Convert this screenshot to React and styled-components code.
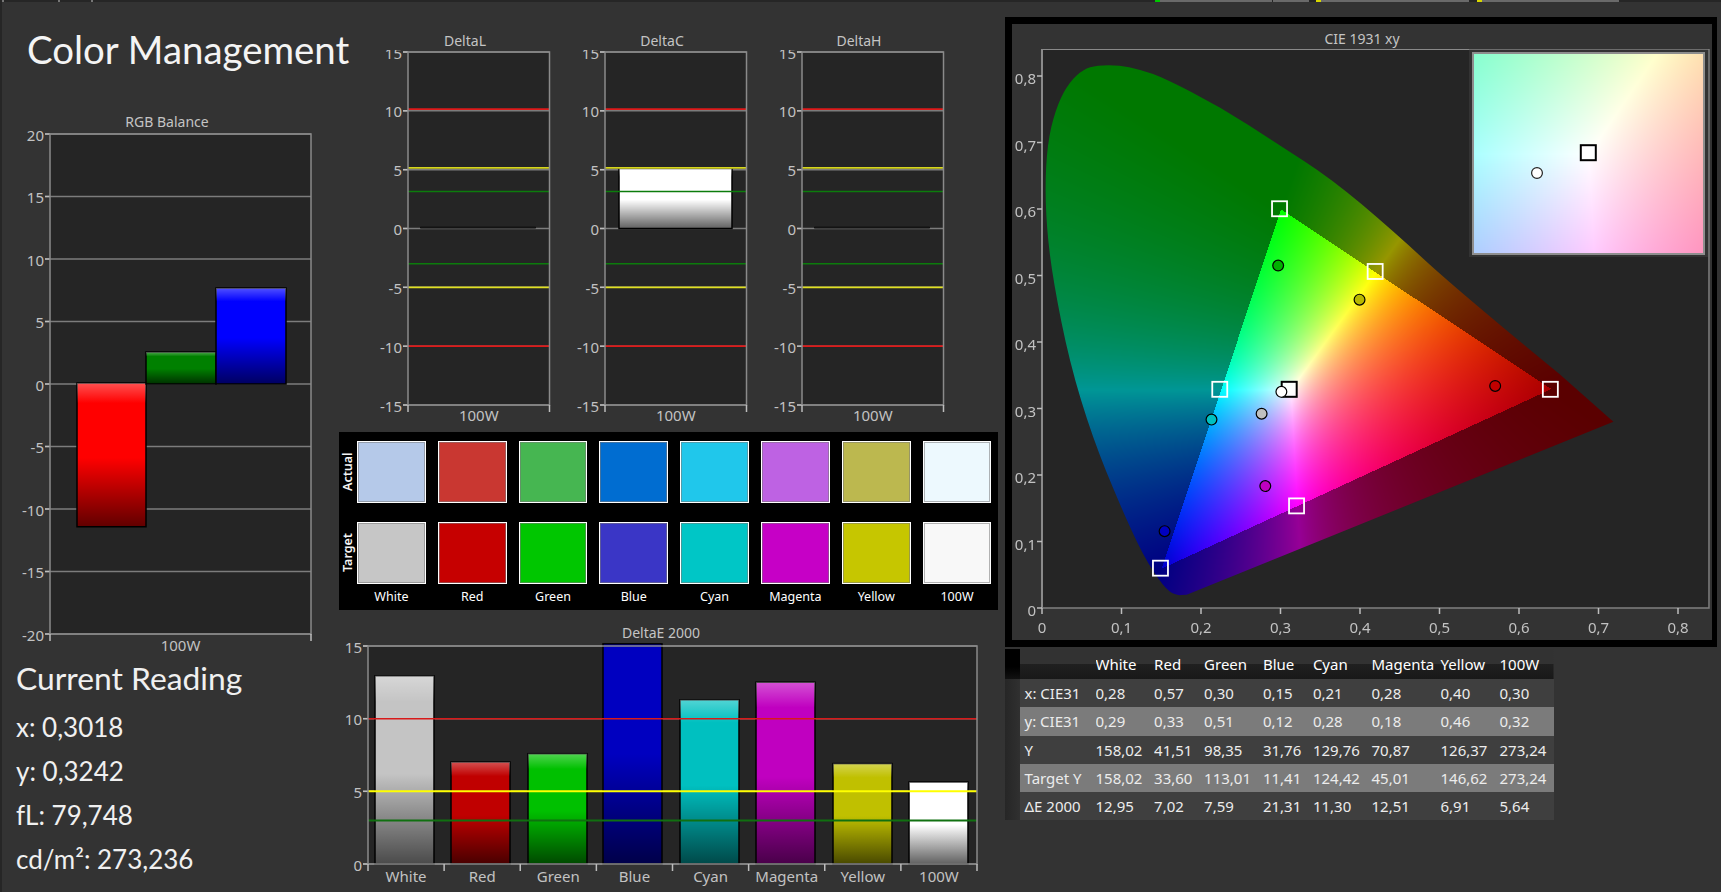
import React, { useEffect, useId, useRef } from "react";
import styled, { createGlobalStyle } from "styled-components";

const SANS = '"Noto Sans", "Liberation Sans", sans-serif';
const HEAD = 'Lato, "Noto Sans", sans-serif';

const GlobalStyle = createGlobalStyle`
  html, body { margin: 0; padding: 0; background: #333; }
  body { font-family: ${SANS}; overflow: hidden; }
`;

const NAMES = ["White", "Red", "Green", "Blue", "Cyan", "Magenta", "Yellow", "100W"];

const ACTUAL = ["#b5c9e9", "#c93731", "#46b651", "#006dd1", "#20c7eb", "#be62e3", "#bcb84f", "#edf9fe"];
const TARGET = ["#c6c6c6", "#c60000", "#00c600", "#3a36c6", "#00c6c6", "#c600c6", "#c6c600", "#f8f8f8"];

const DELTA_LIMITS = [
  { v: 10.15, c: "#de1a1a", w: 1.8 },
  { v: 5.15, c: "#d6d61e", w: 1.8 },
  { v: 3.15, c: "#0c7c0c", w: 1.4 },
  { v: -3, c: "#0c7c0c", w: 1.4 },
  { v: -5, c: "#e0e020", w: 1.8 },
  { v: -10, c: "#de1a1a", w: 1.8 },
];

const E_LIMITS = [
  { v: 10, c: "#d81a1a" },
  { v: 5, c: "#ffff00", w: 2 },
  { v: 3, c: "#107010", w: 2 },
];

const E_BARS = [
  ["#c4c4c4", 12.95, 7],
  ["#c00000", 7.02, 83],
  ["#00c000", 7.59, 160],
  ["#0000c0", 15.15, 235, true],
  ["#00c0c0", 11.3, 312],
  ["#c000c0", 12.51, 388],
  ["#c0c000", 6.91, 465],
  ["#ffffff", 5.64, 541],
].map(([fill, value, x, cut]) => ({ fill, value, x, cut, w: 59 }));

const RGB_BARS = [
  { fill: "#ff0000", value: -11.5, x: 27, w: 69 },
  { fill: "#008000", value: 2.56, x: 96, w: 70 },
  { fill: "#0000ff", value: 7.68, x: 166, w: 70 },
];

const TABLE = [
  ["x: CIE31", "0,28", "0,57", "0,30", "0,15", "0,21", "0,28", "0,40", "0,30"],
  ["y: CIE31", "0,29", "0,33", "0,51", "0,12", "0,28", "0,18", "0,46", "0,32"],
  ["Y", "158,02", "41,51", "98,35", "31,76", "129,76", "70,87", "126,37", "273,24"],
  ["Target Y", "158,02", "33,60", "113,01", "11,41", "124,42", "45,01", "146,62", "273,24"],
  ["ΔE 2000", "12,95", "7,02", "7,59", "21,31", "11,30", "12,51", "6,91", "5,64"],
];
const COLS = [14.5, 76, 58.6, 50, 58.8, 50, 58.6, 69, 59, 54];

// marks along the top edge of the cropped window above
const TOP_MARKS = [
  { w: 2, gap: 2, c: "#777" }, { w: 2, gap: 54, c: "#777" }, { w: 2, gap: 31, c: "#777" },
  { w: 5, gap: 1062, c: "#00c800" }, { w: 112, gap: 0, c: "#6a6a6a" }, { w: 36, gap: 1, c: "#6a6a6a" },
  { w: 5, gap: 7, c: "#d8d800" }, { w: 148, gap: 0, c: "#6a6a6a" },
  { w: 5, gap: 8, c: "#d8d800" }, { w: 137, gap: 0, c: "#6a6a6a" },
];

const Page = styled.div`
  width: 1721px;
  height: 892px;
  box-sizing: border-box;
  border-left: 2px solid #262626;
  background: #333;
  color: #f0f0f0;
  overflow: hidden;
`;
const TopStrip = styled.div`
  height: 2px;
  background: #262626;
  display: flex;
  margin-left: -2px;
`;
const TopMark = styled.i`
  display: block;
  width: ${(p) => p.$w}px;
  margin-left: ${(p) => p.$gap}px;
  background: ${(p) => p.$c};
`;
const Columns = styled.div`
  display: flex;
`;
const LeftColumn = styled.div`
  width: 337px;
  flex: none;
`;
const MidColumn = styled.div`
  width: 659px;
  flex: none;
`;
const RightColumn = styled.div`
  margin-left: 7px;
  width: 712px;
  flex: none;
`;
const Title = styled.h1`
  margin: 22px 0 39px 25px;
  height: 50px;
  font: 400 38.4px/50px ${HEAD};
  color: #f4f4f4;
  white-space: nowrap;
`;
const ChartTitle = styled.div`
  width: ${(p) => p.$w}px;
  margin-left: ${(p) => p.$left || 0}px;
  height: 18px;
  font-size: 14px;
  line-height: 18px;
  text-align: center;
  color: #c4c4c4;
`;
const ChartWrap = styled.div`
  margin-left: ${(p) => p.$left || 0}px;
`;
const ChartSvg = styled.svg`
  display: block;
`;
const AxisText = styled.text`
  font-family: ${SANS};
  font-size: 15px;
  fill: #c2c2c2;
`;
const Reading = styled.div`
  padding-left: 14px;
`;
const ReadingHead = styled.div`
  margin-top: 2px;
  height: 47px;
  font: 400 31.8px/40px ${HEAD};
  color: #f0f0f0;
`;
const ReadingRow = styled.div`
  height: 44px;
  font: 400 26px/44px ${HEAD};
  color: #f0f0f0;
  white-space: nowrap;
`;
const DeltaRow = styled.div`
  display: flex;
  gap: 17px;
  padding: 30px 0 0 36px;
`;
const SwatchPanel = styled.div`
  margin-top: 8px;
  height: 178px;
  box-sizing: border-box;
  padding-top: 9px;
  background: #000;
  display: grid;
  grid-template-columns: 6px repeat(8, 68.8px);
  grid-template-rows: 62px 62px 26px;
  column-gap: 12px;
  row-gap: 19px;
  & > *:nth-child(n + 19) { margin-top: -19px; }
`;
const SideLabel = styled.div`
  width: 18px;
  writing-mode: vertical-rl;
  transform: rotate(180deg);
  text-align: center;
  font-size: 12.5px;
  line-height: 18px;
  font-weight: 600;
  color: #f4f4f4;
`;
const Swatch = styled.div`
  border: 1px solid #fff;
  box-shadow: inset 0 0 0 1px rgba(120, 120, 120, 0.55);
  background: ${(p) => p.$color};
`;
const SwatchName = styled.div`
  grid-column: ${(p) => p.$col};
  font-size: 12.5px;
  line-height: 26px;
  text-align: center;
  color: #fff;
`;
const EBlock = styled.div`
  margin-top: 14px;
`;
const CiePanel = styled.div`
  margin-top: 15px;
  width: 712px;
  height: 630px;
  box-sizing: border-box;
  border: solid #000;
  border-width: 7px 5px 7px 7px;
  background: #333;
`;
const CieTitle = styled.div`
  height: 25px;
  font-size: 14px;
  line-height: 30px;
  text-align: center;
  color: #c4c4c4;
`;
const CieArea = styled.div`
  position: relative;
  width: 700px;
  height: 591px;
`;
const GamutCanvas = styled.canvas`
  position: absolute;
  left: 30px;
  top: 0;
`;
const InsetBox = styled.div`
  position: absolute;
  left: 457px;
  top: 0;
  width: 239px;
  height: 208px;
  background: #333;
`;
const InsetCanvas = styled.canvas`
  position: absolute;
  left: 3px;
  top: 3px;
  border: 2px solid #8e8e8e;
`;
const Overlay = styled.svg`
  position: absolute;
  left: 0;
  top: 0;
`;
const DataTable = styled.table`
  margin-top: 2px;
  width: 548.5px;
  table-layout: fixed;
  border-collapse: collapse;
  font-size: 15px;
  color: #ececec;
  th, td {
    padding: 0;
    font-weight: 400;
    text-align: left;
    white-space: nowrap;
    overflow: hidden;
  }
`;
const TableCol = styled.col`
  width: ${(p) => p.$w}px;
`;
const HeadRow = styled.tr`
  height: 30px;
  background: linear-gradient(#323232 50%, #202020 50%, #181818);
  color: #fff;
`;
const BodyRow = styled.tr`
  height: 28.3px;
  background: ${(p) => (p.$alt ? "#7b7b7b" : "#3f3f3f")};
`;
const StripCell = styled.td`
  background: ${(p) => (p.$head ? "linear-gradient(#000, #000 60%, #111)" : "linear-gradient(90deg, #262626, #303030)")};
`;
const RowName = styled.td`
  && { padding-left: 5px; }
`;

function Chart({ width, height, left, top, plotW, plotH, max, min, labels, labelDy = 17, bars = [], limits = [] }) {
  const id = useId();
  const y = (v) => top + ((max - v) * plotH) / (max - min);
  const zero = y(Math.max(0, min));
  const ticks = [];
  for (let v = max; v >= min; v -= 5) ticks.push(v);
  const cell = plotW / labels.length;
  return (
    <ChartSvg width={width} height={height}>
      <defs>
        <linearGradient id={id} x1="0" y1="0" x2="0" y2="1">
          <stop offset="0" stopColor="#fff" stopOpacity="0.32" />
          <stop offset="0.14" stopColor="#fff" stopOpacity="0" />
          <stop offset="0.52" stopColor="#000" stopOpacity="0" />
          <stop offset="1" stopColor="#000" stopOpacity="0.62" />
        </linearGradient>
        {/* bar that runs off the top of the plot: no highlight shows */}
        <linearGradient id={`${id}cut`} x1="0" y1="0" x2="0" y2="1">
          <stop offset="0.5" stopColor="#000" stopOpacity="0" />
          <stop offset="1" stopColor="#000" stopOpacity="0.62" />
        </linearGradient>
      </defs>
      <rect x={left} y={top} width={plotW} height={plotH} fill="#252525" />
      {ticks.map((v) => (
        <g key={v}>
          <line x1={left - 5} x2={left + plotW} y1={y(v)} y2={y(v)} stroke="#7c7c7c" strokeWidth="1.5" />
          <line x1={left - 5} x2={left} y1={y(v)} y2={y(v)} stroke="#bdbdbd" strokeWidth="1.5" />
          <AxisText x={left - 6} y={y(v) + 6.5} textAnchor="end">{v}</AxisText>
        </g>
      ))}
      {bars.map((b) => {
        const bh = Math.abs(y(b.value) - zero);
        const ty = b.value < 0 ? zero - 1 : Math.min(y(b.value), zero - 1);
        return (
          <g key={b.x}>
            <rect x={left + b.x} y={ty} width={b.w} height={bh} fill={b.fill} stroke="#000" strokeWidth="1.5" />
            <rect x={left + b.x} y={ty} width={b.w} height={bh} fill={`url(#${id}${b.cut ? "cut" : ""})`} />
          </g>
        );
      })}
      {limits.map((l) => (
        <line key={l.v} x1={left} x2={left + plotW} y1={y(l.v)} y2={y(l.v)} stroke={l.c} strokeWidth={l.w || 1.5} />
      ))}
      <rect x={left} y={top} width={plotW} height={plotH} fill="none" stroke="#8a8a8a" strokeWidth="1.5" />
      {labels.map((name, i) => (
        <g key={name}>
          <line x1={left + i * cell} x2={left + i * cell} y1={top + plotH} y2={top + plotH + 7} stroke="#bdbdbd" strokeWidth="1.5" />
          <AxisText x={left + (i + 0.5) * cell} y={top + plotH + labelDy} textAnchor="middle">{name}</AxisText>
        </g>
      ))}
      <line x1={left + plotW} x2={left + plotW} y1={top + plotH} y2={top + plotH + 7} stroke="#bdbdbd" strokeWidth="1.5" />
    </ChartSvg>
  );
}

function DeltaChart({ name, bars }) {
  return (
    <div>
      <ChartTitle $w={180}>{name}</ChartTitle>
      <Chart width={180} height={374} left={33} top={2} plotW={141.5} plotH={353} labelDy={16} max={15} min={-15} labels={["100W"]} limits={DELTA_LIMITS} bars={bars} />
    </div>
  );
}

// xy -> linear sRGB, negative parts clamped, scaled so the largest is 1
function xyColor(x, y) {
  const X = x / y;
  const Z = (1 - x - y) / y;
  const r = 3.2406 * X - 1.5372 - 0.4986 * Z;
  const g = -0.9689 * X + 1.8758 + 0.0415 * Z;
  const b = 0.0557 * X - 0.204 + 1.057 * Z;
  const inside = r >= 0 && g >= 0 && b >= 0;
  const cr = Math.max(r, 0);
  const cg = Math.max(g, 0);
  const cb = Math.max(b, 0);
  const m = Math.max(cr, cg, cb, 0.0001);
  const nr = cr / m;
  const ng = cg / m;
  const nb = cb / m;
  const pureR = nr * (1 - ng) * (1 - nb);
  const pureG = ng * (1 - nr) * (1 - nb);
  const pureB = nb * (1 - nr) * (1 - ng);
  // the reference keeps red and blue primaries darker than green
  const dim = inside
    ? 255 - 85 * Math.pow(pureR, 4) - 55 * Math.pow(pureB, 8)
    : 150 - 60 * pureR - 30 * pureG - 20 * pureB;
  return [nr * dim, ng * dim, nb * dim];
}

const SCALE_X = 795;
const SCALE_Y = 665;
const PLOT_W = 668;
const PLOT_H = 559;
const OX = 30;

// zoom-measured outline of the horseshoe
const LOCUS = [
  [1333, 1002], [1215, 888], [1000, 695], [850, 545], [720, 425], [600, 340], [480, 255], [350, 182], [300, 165],
  [260, 155], [210, 155], [180, 165], [150, 195], [125, 245], [105, 320], [97, 420], [100, 540], [115, 670],
  [150, 860], [200, 1040], [260, 1200], [310, 1320], [355, 1395], [380, 1415], [405, 1413],
].map(([zx, zy]) => [1000 + zx / 2.175 - 1041.5, zy / 2.376 - 49]);

function paintField(ctx, w, h, toXy) {
  const img = ctx.createImageData(w, h);
  for (let j = 0; j < h; j++) {
    for (let i = 0; i < w; i++) {
      const [x, y] = toXy(i, j);
      const [r, g, b] = xyColor(x, Math.max(y, 0.001));
      const k = (j * w + i) * 4;
      img.data[k] = r;
      img.data[k + 1] = g;
      img.data[k + 2] = b;
      img.data[k + 3] = 255;
    }
  }
  ctx.putImageData(img, 0, 0);
}

function Gamut() {
  const ref = useRef(null);
  useEffect(() => {
    const ctx = ref.current.getContext("2d");
    const field = document.createElement("canvas");
    field.width = PLOT_W;
    field.height = PLOT_H;
    paintField(field.getContext("2d"), PLOT_W, PLOT_H, (i, j) => [i / SCALE_X, (PLOT_H - j) / SCALE_Y]);
    ctx.fillStyle = "#252525";
    ctx.fillRect(0, 0, PLOT_W, PLOT_H);
    ctx.beginPath();
    ctx.moveTo(LOCUS[0][0], LOCUS[0][1]);
    ctx.lineTo(LOCUS[1][0], LOCUS[1][1]);
    for (let i = 2; i < LOCUS.length - 1; i++) {
      const mx = (LOCUS[i][0] + LOCUS[i + 1][0]) / 2;
      const my = (LOCUS[i][1] + LOCUS[i + 1][1]) / 2;
      ctx.quadraticCurveTo(LOCUS[i][0], LOCUS[i][1], mx, my);
    }
    ctx.lineTo(LOCUS[LOCUS.length - 1][0], LOCUS[LOCUS.length - 1][1]);
    ctx.closePath();
    ctx.save();
    ctx.clip();
    ctx.drawImage(field, 0, 0);
    ctx.restore();
  }, []);
  return <GamutCanvas ref={ref} width={PLOT_W} height={PLOT_H} />;
}

function Inset() {
  const ref = useRef(null);
  useEffect(() => {
    const { width: w, height: h } = ref.current;
    const ctx = ref.current.getContext("2d");
    paintField(ctx, w, h, (i, j) => [0.3127 + ((i - w / 2) / w) * 0.049, 0.329 + ((h / 2 - j) / h) * 0.048]);
  }, []);
  return (
    <InsetBox>
      <InsetCanvas ref={ref} width={229} height={199} />
    </InsetBox>
  );
}

const zx = (v) => 1000 + v / 2.175 - 1012;
const zy = (v) => v / 2.376 - 49;

const TARGET_MARKS = [[608, 496], [816, 645], [1197, 925], [478, 925], [349, 1350], [645, 1202]];
const READ_MARKS = [
  [569, 983, "#c0c0c0"], [1077, 917, "#c00000"], [605, 631, "#00b000"], [358, 1262, "#0000c0"],
  [460, 997, "#00c0c0"], [577, 1155, "#c000c0"], [782, 712, "#b8b800"],
];

function CieOverlay() {
  const plotRight = OX + PLOT_W;
  const xTicks = [0, 1, 2, 3, 4, 5, 6, 7, 8];
  const fmt = (n) => (n === 0 ? "0" : `0,${n}`);
  return (
    <Overlay width={700} height={591}>
      <polyline points={`${OX},${PLOT_H} ${OX},0 457,0`} fill="none" stroke="#8a8a8a" strokeWidth="2" />
      <polyline points={`457,0 ${plotRight - 1},0 ${plotRight - 1},${PLOT_H} ${OX},${PLOT_H}`} fill="none" stroke="#808080" strokeWidth="1.5" />
      {xTicks.map((n) => (
        <g key={n}>
          <line x1={OX + (n / 10) * SCALE_X} x2={OX + (n / 10) * SCALE_X} y1={PLOT_H} y2={PLOT_H + 6} stroke="#bdbdbd" strokeWidth="1.5" />
          <AxisText x={OX + (n / 10) * SCALE_X} y={PLOT_H + 25} textAnchor="middle">{fmt(n)}</AxisText>
          <line x1={OX - 5} x2={OX} y1={PLOT_H - (n / 10) * SCALE_Y} y2={PLOT_H - (n / 10) * SCALE_Y} stroke="#bdbdbd" strokeWidth="1.5" />
          <AxisText x={OX - 6} y={PLOT_H - (n / 10) * SCALE_Y + 8} textAnchor="end">{fmt(n)}</AxisText>
        </g>
      ))}
      {TARGET_MARKS.map(([a, b]) => (
        <rect key={a} x={zx(a) - 7.5} y={zy(b) - 7.5} width="15" height="15" fill="none" stroke="#fff" strokeWidth="1.8" />
      ))}
      <rect x={zx(629) - 7.5} y={zy(925) - 7.5} width="15" height="15" fill="#fff" fillOpacity="0.85" stroke="#000" strokeWidth="2" />
      {READ_MARKS.map(([a, b, c]) => (
        <circle key={a} cx={zx(a)} cy={zy(b)} r="5.4" fill={c} stroke="#000" strokeWidth="1.2" />
      ))}
      <circle cx={zx(612)} cy={zy(931)} r="5.4" fill="#fff" stroke="#000" strokeWidth="1.2" />
      <rect x={1588.3 - 1012 - 7.5} y={152.7 - 49 - 7.5} width="15" height="15" fill="#fff" stroke="#000" strokeWidth="2" />
      <circle cx={1537 - 1012} cy={173 - 49} r="5.4" fill="#fff" stroke="#222" strokeWidth="1.2" />
    </Overlay>
  );
}

export default function App() {
  return (
    <Page>
      <GlobalStyle />
      <TopStrip>
        {TOP_MARKS.map((m, i) => (
          <TopMark key={i} $w={m.w} $gap={m.gap} $c={m.c} />
        ))}
      </TopStrip>
      <Columns>
        <LeftColumn>
          <Title>Color Management</Title>
          <ChartTitle $w={302} $left={14}>RGB Balance</ChartTitle>
          <ChartWrap $left={14}>
            <Chart width={302} height={525} left={34} top={3} plotW={261} plotH={500} max={20} min={-20} labels={["100W"]} bars={RGB_BARS} />
          </ChartWrap>
          <Reading>
            <ReadingHead>Current Reading</ReadingHead>
            <ReadingRow>x: 0,3018</ReadingRow>
            <ReadingRow>y: 0,3242</ReadingRow>
            <ReadingRow>fL: 79,748</ReadingRow>
            <ReadingRow>cd/m²: 273,236</ReadingRow>
          </Reading>
        </LeftColumn>
        <MidColumn>
          <DeltaRow>
            <DeltaChart name="DeltaL" bars={[{ fill: "#000", value: 0.02, x: 13, w: 114 }]} />
            <DeltaChart name="DeltaC" bars={[{ fill: "#ffffff", value: 5.1, x: 14, w: 113 }]} />
            <DeltaChart name="DeltaH" bars={[{ fill: "#000", value: 0.02, x: 13, w: 114 }]} />
          </DeltaRow>
          <SwatchPanel>
            <SideLabel>Actual</SideLabel>
            {ACTUAL.map((c) => <Swatch key={c} $color={c} />)}
            <SideLabel>Target</SideLabel>
            {TARGET.map((c) => <Swatch key={c} $color={c} />)}
            {NAMES.map((n, i) => <SwatchName key={n} $col={i + 2}>{n}</SwatchName>)}
          </SwatchPanel>
          <EBlock>
            <ChartTitle $w={642} $left={1}>DeltaE 2000</ChartTitle>
            <Chart width={650} height={246} left={29} top={4} plotW={609} plotH={218} labelDy={18} max={15} min={0} labels={NAMES} bars={E_BARS} limits={E_LIMITS} />
          </EBlock>
        </MidColumn>
        <RightColumn>
          <CiePanel>
            <CieTitle>CIE 1931 xy</CieTitle>
            <CieArea>
              <Gamut />
              <Inset />
              <CieOverlay />
            </CieArea>
          </CiePanel>
          <DataTable>
            <colgroup>
              {COLS.map((w, i) => <TableCol key={i} $w={w} />)}
            </colgroup>
            <thead>
              <HeadRow>
                <StripCell $head />
                <th />
                {NAMES.map((n) => <th key={n}>{n}</th>)}
              </HeadRow>
            </thead>
            <tbody>
              {TABLE.map((row, i) => (
                <BodyRow key={row[0]} $alt={i % 2 === 1}>
                  <StripCell />
                  <RowName>{row[0]}</RowName>
                  {row.slice(1).map((v, j) => <td key={j}>{v}</td>)}
                </BodyRow>
              ))}
            </tbody>
          </DataTable>
        </RightColumn>
      </Columns>
    </Page>
  );
}
